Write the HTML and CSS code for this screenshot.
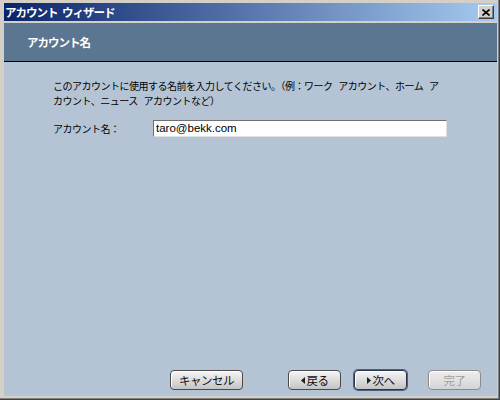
FILE: index.html
```html
<!DOCTYPE html>
<html lang="ja">
<head>
<meta charset="utf-8">
<title>アカウント ウィザード</title>
<link rel="stylesheet" href="styles.css">
</head>
<body>
<div class="window">
  <div class="titlebar">
    <span class="title">アカウント ウィザード</span>
    <span class="close"><svg width="8" height="7" viewBox="0 0 8 7"><path d="M0.5 0.5 L7.5 6.5 M7.5 0.5 L0.5 6.5" stroke="#000" stroke-width="1.6" fill="none"/></svg></span>
  </div>
  <div class="header">アカウント名</div>
  <div class="content">
    <p class="desc">このアカウントに使用する名前を入力してください。（例：ワーク アカウント、ホーム ア<br>カウント、ニュース アカウントなど）</p>
    <div class="row">
      <span class="label">アカウント名：</span>
      <div class="input">taro@bekk.com</div>
    </div>
    <div class="footer">
      <div class="btn cancel">キャンセル</div>
      <div class="btn back"><svg class="tri" width="4" height="7" viewBox="0 0 4 7"><path d="M4 0 L0 3.5 L4 7 Z" fill="#202020"/></svg>戻る</div>
      <div class="btn next"><svg class="tri" width="4" height="7" viewBox="0 0 4 7"><path d="M0 0 L4 3.5 L0 7 Z" fill="#202020"/></svg>次へ</div>
      <div class="btn finish disabled">完了</div>
    </div>
  </div>
</div>
</body>
</html>
```
FILE: styles.css
```css
html, body {
  margin: 0;
  padding: 0;
}
body {
  font-family: "Noto Sans CJK JP", "Liberation Sans", sans-serif;
  font-size: 11px;
}
.window {
  width: 500px;
  height: 400px;
  box-sizing: border-box;
  background: #d4d0c8;
  padding: 3px 3px 4px 4px;
  display: flex;
  flex-direction: column;
  box-shadow: inset -1px -1px 0 #404040, inset -2px -2px 0 #808080;
}
.titlebar {
  height: 18px;
  flex: none;
  display: flex;
  align-items: center;
  justify-content: space-between;
  background: linear-gradient(to right, #0a246a, #a6caf0);
  padding-left: 1px;
  padding-right: 3px;
}
.title {
  color: #fff;
  font-weight: bold;
  font-size: 11.5px;
  line-height: 18px;
  letter-spacing: -1px;
  word-spacing: 3px;
}
.close {
  width: 16px;
  height: 14px;
  box-sizing: border-box;
  background: #d4d0c8;
  border-top: 1px solid #fff;
  border-left: 1px solid #fff;
  border-right: 1px solid #404040;
  border-bottom: 1px solid #404040;
  box-shadow: inset -1px -1px 0 #808080;
  display: flex;
  align-items: center;
  justify-content: center;
}
.header {
  margin-top: 2px;
  height: 38px;
  flex: none;
  background: #5b7690;
  border-bottom: 1px solid #000;
  color: #fff;
  font-weight: bold;
  font-size: 11.5px;
  letter-spacing: -1px;
  display: flex;
  align-items: center;
  padding-left: 23px;
}
.content {
  flex: 1;
  background: #b4c4d4;
  display: flex;
  flex-direction: column;
  padding: 17px 0 6px 49px;
  color: #000;
}
.desc {
  margin: 0;
  line-height: 14.5px;
  font-size: 10px;
  letter-spacing: -0.5px;
  word-spacing: 4px;
  white-space: nowrap;
}
.row {
  margin-top: 12px;
  display: flex;
  align-items: center;
}
.label {
  width: 100px;
  line-height: 17px;
  font-size: 10px;
  letter-spacing: -0.5px;
}
.input {
  width: 294px;
  height: 17px;
  box-sizing: border-box;
  background: #fff;
  border-top: 1px solid #707070;
  border-left: 1px solid #707070;
  border-right: 1px solid #e0e0e0;
  border-bottom: 1px solid #e0e0e0;
  font-family: "Liberation Sans", sans-serif;
  font-size: 11.5px;
  line-height: 15px;
  padding-left: 2px;
}
.footer {
  margin-top: auto;
  display: flex;
  padding-left: 117px;
}
.btn {
  height: 20px;
  box-sizing: border-box;
  border: 1px solid #4a4a4a;
  border-radius: 4px;
  background: linear-gradient(#f6f6f6, #d8d8d8 60%, #c4c4c4);
  box-shadow: inset 1px 1px 0 #fff;
  display: flex;
  align-items: center;
  justify-content: center;
  font-size: 11.5px;
  letter-spacing: -0.5px;
  line-height: 18px;
  color: #101010;
}
.tri {
  margin-right: 2px;
}
.cancel {
  width: 73px;
}
.back {
  width: 53px;
  margin-left: 45px;
}
.next {
  width: 53px;
  margin-left: 13px;
  border: 1px solid #2c3448;
  box-shadow: 0 0 0 1px #50607c, inset 1px 1px 0 #fff;
}
.finish {
  width: 53px;
  margin-left: 21px;
}
.disabled {
  color: #a0a0a0;
  border-color: #8c8c8c;
  background: linear-gradient(#eeeeee, #d4d4d4);
}
```
